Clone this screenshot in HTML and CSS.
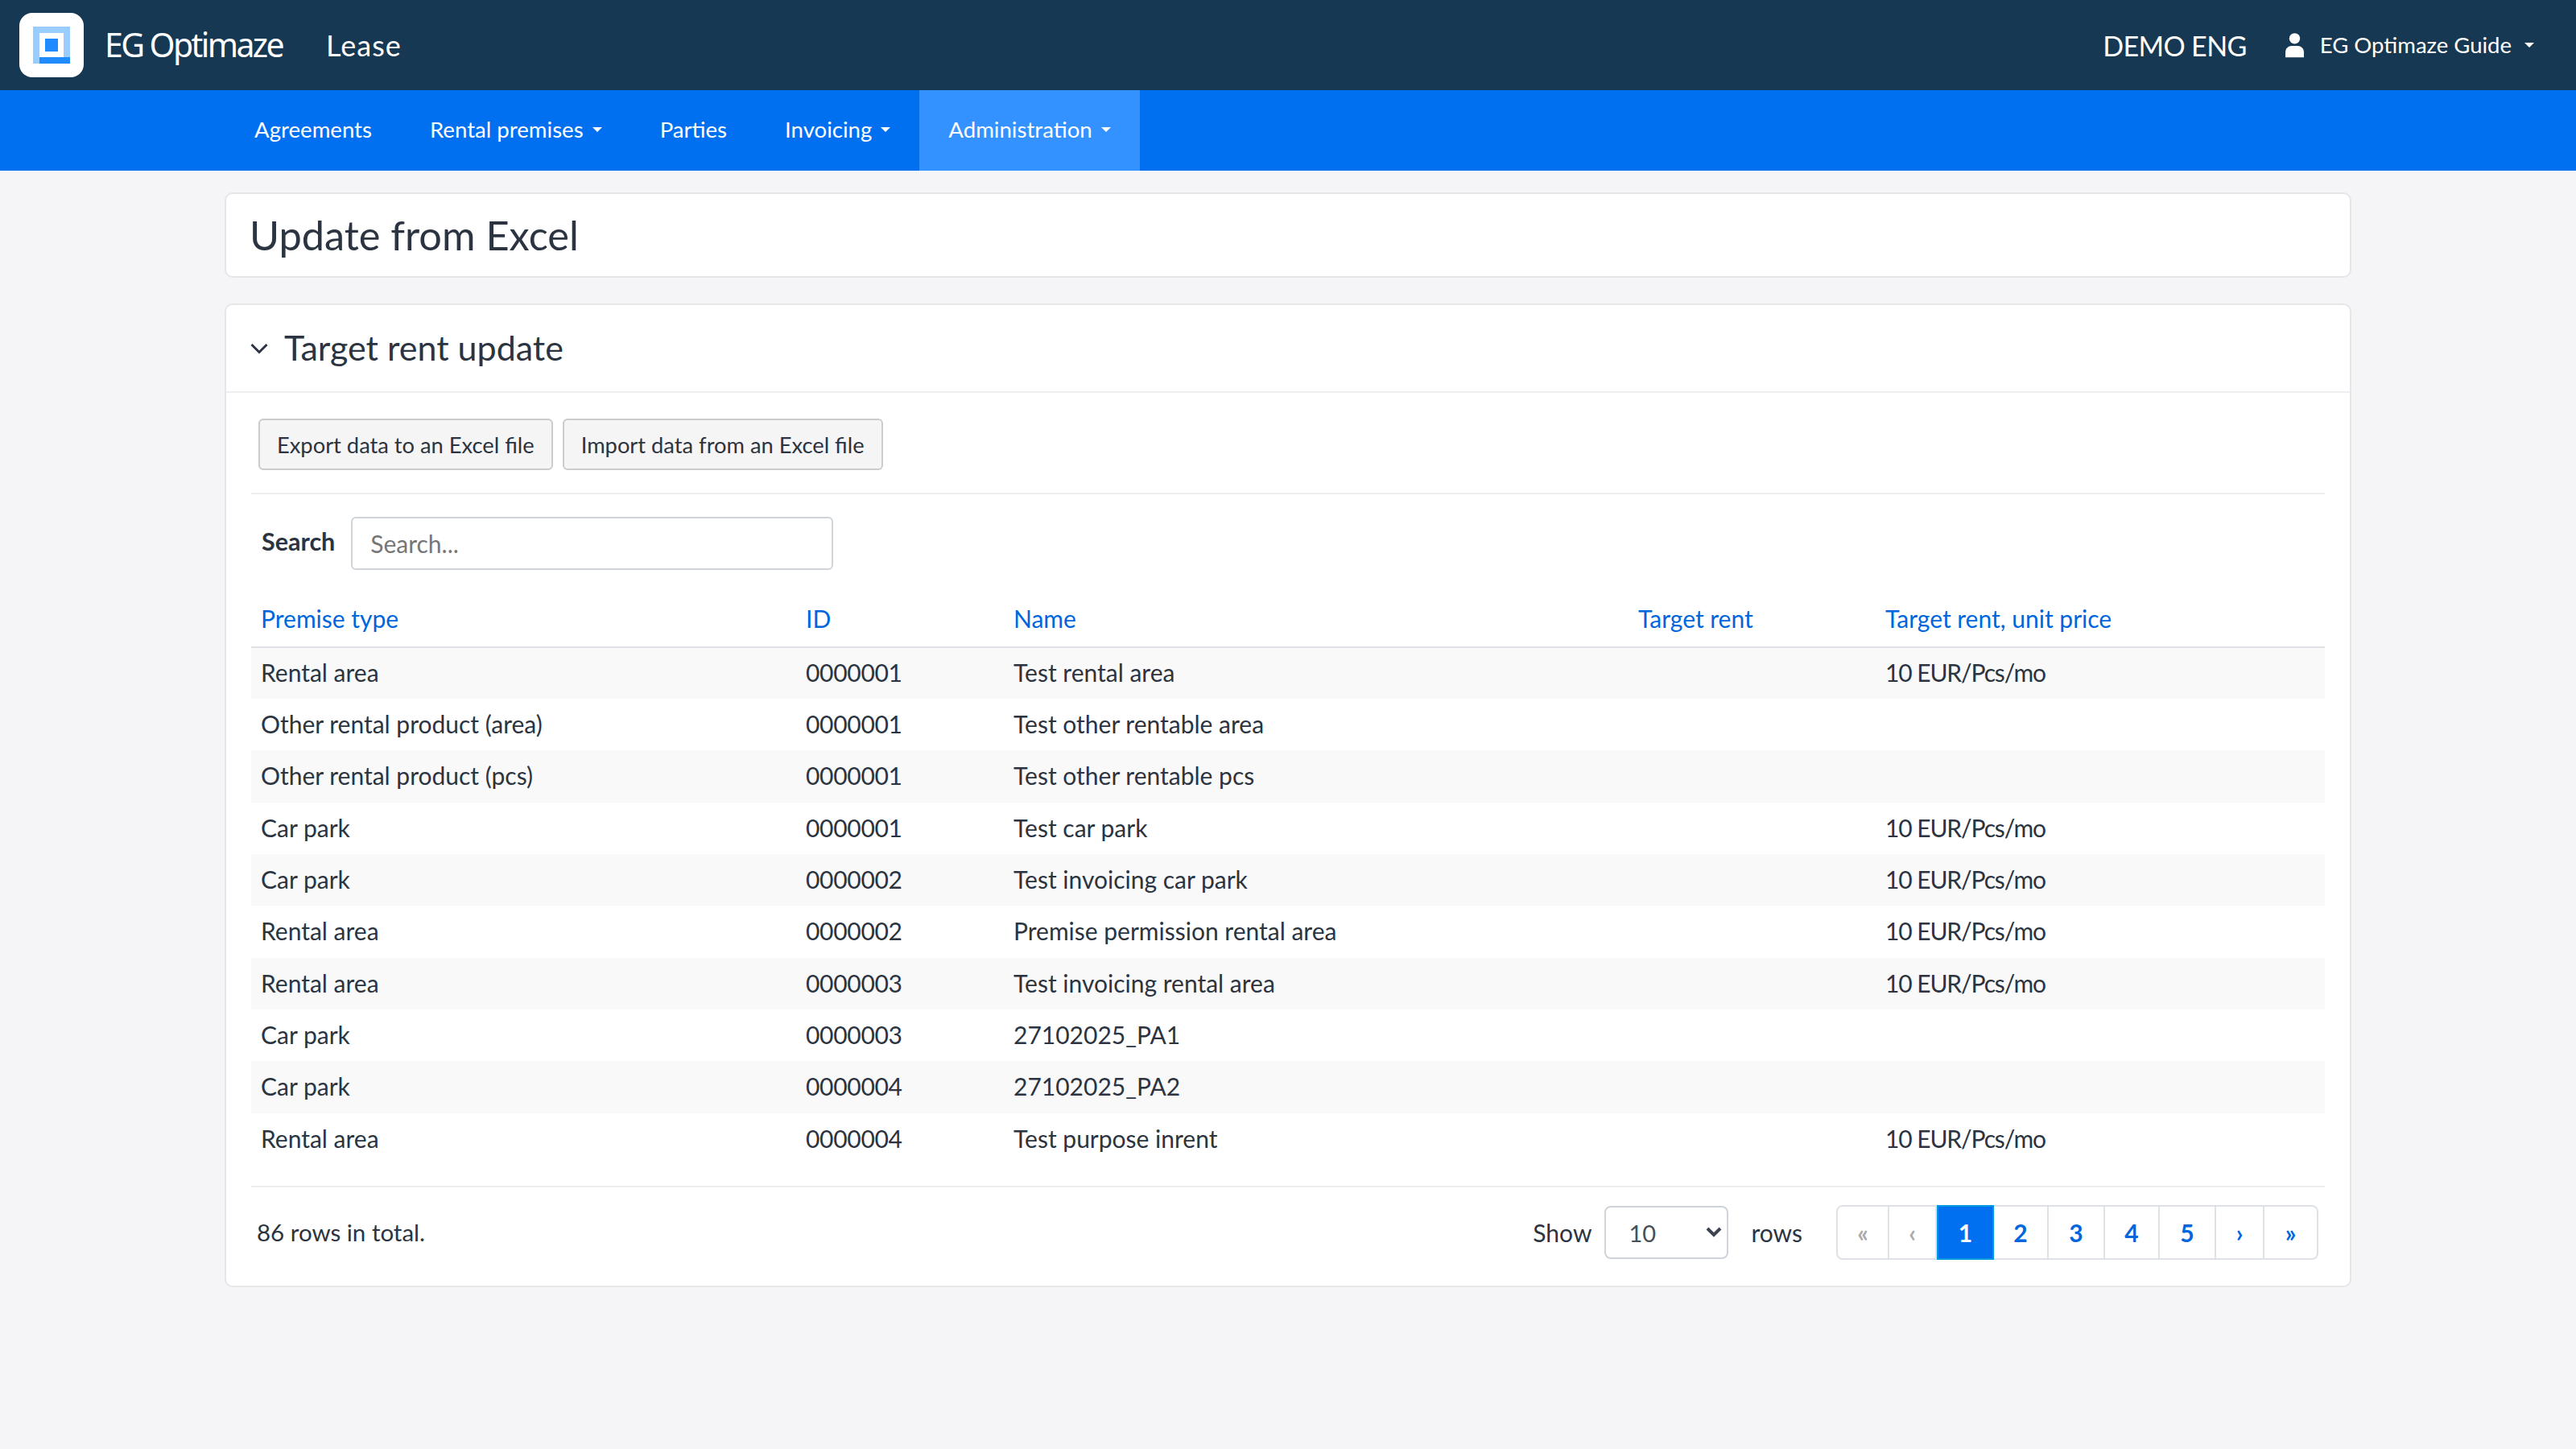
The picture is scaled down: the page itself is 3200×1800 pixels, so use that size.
FILE: index.html
```html
<!DOCTYPE html>
<html lang="en">
<head>
    <meta charset="UTF-8">
    <title>Update from Excel</title>
    <link rel="stylesheet" href="styles.css">
</head>
<body>
    <header class="topbar">
        <div class="logo">
            <svg width="46" height="46" viewBox="0 0 46 46">
                <path fill="#99ccff" d="M0 0h46v38h-8V8H8v38H0z"/>
                <path fill="#1f8bff" d="M8 38h38v8H8z"/>
                <path fill="#1f8bff" d="M15 15h16v16H15z"/>
            </svg>
        </div>
        <span class="brand">EG Optimaze</span>
        <span class="module">Lease</span>
        <span class="company">DEMO ENG</span>
        <span class="user">
            <svg class="user-icon" width="23" height="32" viewBox="0 0 24 32">
                <circle cx="12" cy="7.5" r="7"/>
                <path d="M0 32v-6c0-6 4-9 8-9h8c4 0 8 3 8 9v6z"/>
            </svg>
            EG Optimaze Guide
            <i class="caret caret-user"></i>
        </span>
    </header>
    <nav class="mainnav">
        <a>Agreements</a>
        <a>Rental premises<i class="caret"></i></a>
        <a>Parties</a>
        <a>Invoicing<i class="caret"></i></a>
        <a class="active">Administration<i class="caret"></i></a>
    </nav>
    <main class="content">
        <section class="card title-card">
            <h1>Update from Excel</h1>
        </section>
        <section class="card">
            <div class="card-head">
                <svg class="chevron" width="22" height="14" viewBox="0 0 22 14">
                    <path d="M1.5 2L11 11.5 20.5 2" fill="none" stroke="#2b3440" stroke-width="3"/>
                </svg>
                <h2>Target rent update</h2>
            </div>
            <div class="card-body">
                <div class="actions">
                    <button class="btn">Export data to an Excel file</button>
                    <button class="btn">Import data from an Excel file</button>
                </div>
                <div class="search">
                    <label>Search</label>
                    <input type="text" placeholder="Search...">
                </div>
                <table class="grid">
                    <colgroup>
                        <col class="c1"><col class="c2"><col class="c3"><col class="c4"><col class="c5">
                    </colgroup>
                    <thead>
                        <tr><th>Premise type</th><th>ID</th><th>Name</th><th>Target rent</th><th>Target rent, unit price</th></tr>
                    </thead>
                    <tbody>
                        <tr><td>Rental area</td><td>0000001</td><td>Test rental area</td><td></td><td>10 EUR/Pcs/mo</td></tr>
                        <tr><td>Other rental product (area)</td><td>0000001</td><td>Test other rentable area</td><td></td><td></td></tr>
                        <tr><td>Other rental product (pcs)</td><td>0000001</td><td>Test other rentable pcs</td><td></td><td></td></tr>
                        <tr><td>Car park</td><td>0000001</td><td>Test car park</td><td></td><td>10 EUR/Pcs/mo</td></tr>
                        <tr><td>Car park</td><td>0000002</td><td>Test invoicing car park</td><td></td><td>10 EUR/Pcs/mo</td></tr>
                        <tr><td>Rental area</td><td>0000002</td><td>Premise permission rental area</td><td></td><td>10 EUR/Pcs/mo</td></tr>
                        <tr><td>Rental area</td><td>0000003</td><td>Test invoicing rental area</td><td></td><td>10 EUR/Pcs/mo</td></tr>
                        <tr><td>Car park</td><td>0000003</td><td>27102025_PA1</td><td></td><td></td></tr>
                        <tr><td>Car park</td><td>0000004</td><td>27102025_PA2</td><td></td><td></td></tr>
                        <tr><td>Rental area</td><td>0000004</td><td>Test purpose inrent</td><td></td><td>10 EUR/Pcs/mo</td></tr>
                    </tbody>
                </table>
                <div class="foot">
                    <span class="total">86 rows in total.</span>
                    <span class="show">Show</span>
                    <span class="select-wrap">
                        <select>
                            <option>10</option>
                            <option>25</option>
                            <option>50</option>
                        </select>
                        <svg class="select-arrow" width="20" height="14" viewBox="0 0 20 14">
                            <path d="M2 2l8 8 8-8" fill="none" stroke="#3b4450" stroke-width="4"/>
                        </svg>
                    </span>
                    <span class="rows">rows</span>
                    <div class="pager">
                        <a class="off w64">«</a>
                        <a class="off w59">‹</a>
                        <a class="on w71">1</a>
                        <a class="num w68">2</a>
                        <a class="num w70">3</a>
                        <a class="num w68">4</a>
                        <a class="num w70">5</a>
                        <a class="w60">›</a>
                        <a class="w65">»</a>
                    </div>
                </div>
            </div>
        </section>
    </main>
</body>
</html>
```

FILE: styles.css
```css
* {
    margin: 0;
    padding: 0;
    box-sizing: border-box;
}
body {
    background: #f5f5f7;
    color: #2b3440;
    font: 30px/1.5 Lato, "Liberation Sans", sans-serif;
    min-height: 1800px;
}

/* top bar */
.topbar {
    height: 112px;
    background: #163853;
    color: #fff;
    display: flex;
    align-items: center;
    padding: 0 52px 0 24px;
}
.logo {
    width: 80px;
    height: 80px;
    background: #fff;
    border-radius: 16px;
    display: flex;
    align-items: center;
    justify-content: center;
}
.logo svg {
    display: block;
}
.brand {
    font-family: "Noto Sans", sans-serif;
    font-size: 41px;
    margin-left: 26px;
    letter-spacing: -2.6px;
}
.module {
    font-size: 36px;
    letter-spacing: 1px;
    margin-left: 54px;
}
.company {
    font-size: 34px;
    letter-spacing: -0.6px;
    margin-left: auto;
}
.user {
    display: flex;
    align-items: center;
    font-size: 27.5px;
    margin-left: 48px;
}
.user-icon {
    fill: #fff;
    margin-right: 20px;
}
.caret {
    display: inline-block;
    margin-left: 11px;
    border-top: 6px solid #fff;
    border-left: 6px solid transparent;
    border-right: 6px solid transparent;
}
.caret-user {
    margin-left: 16px;
}

/* main nav */
.mainnav {
    height: 100px;
    background: #0070f0;
    display: flex;
    padding-left: 280px;
}
.mainnav a {
    display: flex;
    align-items: center;
    padding: 0 36px 2px;
    color: #fff;
    font-size: 27.6px;
}
.mainnav .active {
    background: #3392ff;
}

/* cards */
.content {
    width: 2642px;
    margin: 27px auto 0;
}
.card {
    background: #fff;
    border: 2px solid #e6e6e9;
    border-radius: 10px;
    margin-bottom: 32px;
}
.title-card {
    height: 106px;
    display: flex;
    align-items: center;
    padding-left: 29px;
}
h1 {
    font-size: 50.5px;
    font-weight: 400;
}
h2 {
    font-size: 43px;
    font-weight: 400;
}
.card-head {
    height: 109px;
    display: flex;
    align-items: center;
    padding-left: 30px;
    border-bottom: 2px solid #eeeef0;
}
.chevron {
    margin-right: 20px;
}
.card-body {
    padding: 32px 31px 32px;
}
.actions {
    display: flex;
    gap: 12px;
    padding: 0 9px 28px;
    border-bottom: 2px solid #eeeef0;
}
.btn {
    height: 64px;
    padding: 0 21px;
    background: #f5f5f5;
    border: 2px solid #ccc;
    border-radius: 6px;
    color: #2b3440;
    font: 27.3px Lato, sans-serif;
}
.search {
    display: flex;
    align-items: center;
    padding: 28px 0 0 13px;
}
.search label {
    font-weight: 700;
    font-size: 30.5px;
    margin-right: 20px;
    padding-bottom: 4px;
}
.search input {
    width: 599px;
    height: 66px;
    padding: 0 22px;
    border: 2px solid #ced4da;
    border-radius: 6px;
    color: #2b3440;
    font: 30px Lato, sans-serif;
}
.search input::placeholder {
    color: #767676;
}

/* table */
.grid {
    width: 100%;
    table-layout: fixed;
    border-collapse: collapse;
    margin-top: 28px;
}
.c1 { width: 677px; }
.c2 { width: 258px; }
.c3 { width: 776px; }
.c4 { width: 307px; }
.grid th {
    height: 68px;
    padding: 0 12px 2px;
    text-align: left;
    font-weight: 400;
    color: #0066dd;
    border-bottom: 2px solid #dee2e6;
}
.grid td {
    height: 64px;
    padding: 0 12px 2px;
    white-space: nowrap;
}
.grid tr:nth-child(3n) td {
    height: 65px;
}
.grid td:nth-child(2) {
    letter-spacing: -0.3px;
}
.grid td:last-child {
    letter-spacing: -1.1px;
}
.grid tbody tr:nth-child(odd) {
    background: #f9f9fa;
}

/* footer with pager */
.foot {
    display: flex;
    align-items: center;
    margin-top: 26px;
    padding: 22px 8px 0 7px;
    border-top: 2px solid #eeeef0;
}
.total {
    font-size: 29.5px;
    margin-right: auto;
}
.select-wrap {
    position: relative;
    margin: 0 28px 0 16px;
}
.select-wrap select {
    display: block;
    width: 154px;
    height: 66px;
    padding-left: 28px;
    appearance: none;
    background: #fff;
    border: 2px solid #ced4da;
    border-radius: 8px;
    color: #495057;
    font: 29px Lato, sans-serif;
}
.select-arrow {
    position: absolute;
    right: 8px;
    top: 26px;
}
.rows {
    margin-right: 42px;
}
.pager {
    display: flex;
    height: 68px;
    border: 2px solid #dee2e6;
    border-radius: 8px;
}
.pager a {
    display: flex;
    align-items: center;
    justify-content: center;
    border-right: 2px solid #dee2e6;
    color: #0066dd;
    font-size: 30px;
    font-weight: 700;
}
.pager a:last-child {
    border-right: 0;
}
.pager .off {
    color: #aaa;
}
.pager .on {
    margin: -2px 0;
    background: #0070f0;
    color: #fff;
    border: 2px solid #0099dd;
}
.w59 { width: 59px; }
.w60 { width: 60px; }
.w64 { width: 64px; }
.w65 { width: 65px; }
.w68 { width: 68px; }
.w70 { width: 70px; }
.w71 { width: 71px; }
```
